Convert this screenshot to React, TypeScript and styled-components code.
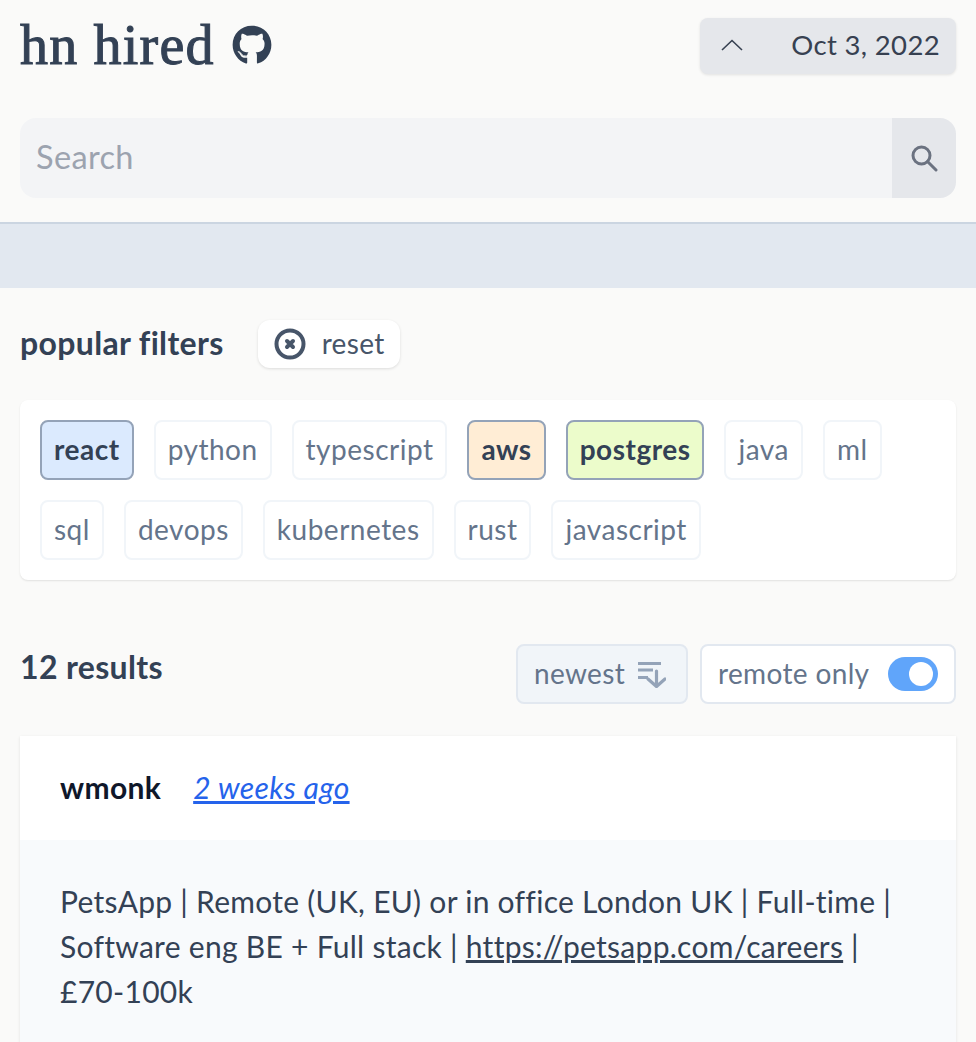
import React from 'react'
import styled, { createGlobalStyle } from 'styled-components'
import { FaGithub } from 'react-icons/fa'

const TAGS: { label: string, color?: string }[] = [
  { label: 'react', color: '#dbeafe' },
  { label: 'python' },
  { label: 'typescript' },
  { label: 'aws', color: '#ffedd5' },
  { label: 'postgres', color: '#ecfccb' },
  { label: 'java' },
  { label: 'ml' },
  { label: 'sql' },
  { label: 'devops' },
  { label: 'kubernetes' },
  { label: 'rust' },
  { label: 'javascript' },
]

export default function App() {
  return (
    <Page>
      <GlobalStyle />
      <Header>
        <TopRow>
          <Brand>
            <Title>hn hired</Title>
            <FaGithub size={40} color="#334155" />
          </Brand>
          <DateButton>
            <svg width="22" height="12" viewBox="0 0 22 12" fill="none" stroke="#374151" strokeWidth="1.6">
              <path d="M1 11 L11 1.5 L21 11" />
            </svg>
            <span>Oct 3, 2022</span>
          </DateButton>
        </TopRow>
        <SearchBar>
          <SearchField>Search</SearchField>
          <SearchButton>
            <svg width="28" height="28" viewBox="0 0 28 28" fill="none" stroke="#6b7280" strokeWidth="3">
              <circle cx="11.5" cy="11.5" r="8.5" />
              <path d="M17.5 17.5 L26 26" strokeLinecap="round" />
            </svg>
          </SearchButton>
        </SearchBar>
      </Header>
      <Band />
      <Main>
        <FilterHead>
          <Heading>popular filters</Heading>
          <ResetButton>
            <svg width="32" height="32" viewBox="0 0 32 32" fill="none" stroke="#475569">
              <circle cx="16" cy="16" r="13.5" strokeWidth="4" />
              <path d="M13 13 L19 19 M19 13 L13 19" strokeWidth="4" strokeLinecap="round" />
            </svg>
            <span>reset</span>
          </ResetButton>
        </FilterHead>
        <TagPanel>
          {TAGS.map(tag => <Tag key={tag.label} $color={tag.color}>{tag.label}</Tag>)}
        </TagPanel>
        <ResultsRow>
          <Heading>12 results</Heading>
          <Controls>
            <SortButton>
              newest
              <svg width="28" height="28" viewBox="0 0 28 28" fill="none" stroke="#94a3b8" strokeWidth="3.2">
                <path d="M0 3.5 H23 M0 10 H15 M0 17.5 H10" />
                <path d="M18.5 11 V26 M10 19 L18.5 26.5 L27 19" strokeLinecap="round" strokeLinejoin="round" />
              </svg>
            </SortButton>
            <RemoteToggle>
              remote only
              <Switch />
            </RemoteToggle>
          </Controls>
        </ResultsRow>
        <Card>
          <CardHead>
            <Author>wmonk</Author>
            <TimeLink href="#">2 weeks ago</TimeLink>
          </CardHead>
          <CardBody>
            <p>
              PetsApp | Remote (UK, EU) or in office London UK | Full-time | Software eng BE + Full stack | <BodyLink href="#">https://petsapp.com/careers</BodyLink> | <NoBreak>£70-100k</NoBreak>
            </p>
            <FadedLine>We help pet owners look after their animals. The team is small and growing</FadedLine>
          </CardBody>
        </Card>
      </Main>
    </Page>
  )
}

const GlobalStyle = createGlobalStyle`
  html, body {
    margin: 0;
    padding: 0;
    background: #fafaf9;
  }
  body {
    font-family: "Lato", sans-serif;
    letter-spacing: 0.35px;
    color: #334155;
  }
`

const Page = styled.div`
  height: 1042px;
  overflow: hidden;
`

const Header = styled.header`
  padding: 18px 20px 24px;
  border-bottom: 2px solid #cbd5e1;
`

const TopRow = styled.div`
  display: flex;
  justify-content: space-between;
  align-items: flex-start;
  margin-bottom: 44px;
`

const Brand = styled.div`
  display: flex;
  align-items: center;
  gap: 17px;
  height: 54px;
`

const Title = styled.h1`
  margin: 0;
  font-family: "Liberation Serif", serif;
  font-size: 56px;
  font-weight: 400;
  letter-spacing: 1.2px;
  color: #334155;
  -webkit-text-stroke: 1px #334155;
`

const DateButton = styled.div`
  width: 256px;
  height: 56px;
  box-sizing: border-box;
  padding: 0 16px 3px 21px;
  display: flex;
  align-items: center;
  justify-content: space-between;
  background: #e5e7eb;
  border-radius: 8px;
  box-shadow: 0 1px 3px rgba(0, 0, 0, 0.1);
  font-size: 27.5px;
  color: #374151;
`

const SearchBar = styled.div`
  display: flex;
  height: 80px;
  border-radius: 16px;
  overflow: hidden;
`

const SearchField = styled.div`
  flex: 1;
  padding: 0 0 4px 16px;
  display: flex;
  align-items: center;
  background: #f3f4f6;
  font-size: 32.5px;
  color: #9ca3af;
`

const SearchButton = styled.div`
  width: 64px;
  display: flex;
  align-items: center;
  justify-content: center;
  background: #e5e7eb;
`

const Band = styled.div`
  height: 64px;
  background: #e2e8f0;
`

const Main = styled.main`
  padding: 32px 20px 0;
`

const FilterHead = styled.div`
  display: flex;
  align-items: center;
  gap: 34px;
  margin-bottom: 32px;
`

const Heading = styled.h2`
  margin: 0 0 2px;
  font-size: 32px;
  line-height: 46px;
  font-weight: 700;
  color: #334155;
`

const ResetButton = styled.div`
  height: 48px;
  width: 142px;
  box-sizing: border-box;
  padding: 0 0 2px 16px;
  display: flex;
  align-items: center;
  gap: 16px;
  background: #fff;
  border-radius: 12px;
  box-shadow: 0 1px 3px rgba(0, 0, 0, 0.12);
  font-size: 28px;
  color: #475569;

  svg {
    margin-top: 2px;
  }
`

const TagPanel = styled.div`
  display: flex;
  flex-wrap: wrap;
  gap: 20px;
  padding: 20px;
  margin-bottom: 64px;
  background: #fff;
  border-radius: 8px;
  box-shadow: 0 1px 2px rgba(0, 0, 0, 0.1);
`

const Tag = styled.div<{ $color?: string }>`
  height: 60px;
  box-sizing: border-box;
  padding: 0 12px 2px;
  display: flex;
  align-items: center;
  border-radius: 8px;
  font-size: 28px;
  letter-spacing: 0.5px;
  background: ${({ $color }) => $color || '#fff'};
  border: 2px solid ${({ $color }) => ($color ? '#94a3b8' : '#f1f5f9')};
  color: ${({ $color }) => ($color ? '#334155' : '#64748b')};
  font-weight: ${({ $color }) => ($color ? 700 : 400)};
`

const ResultsRow = styled.div`
  display: flex;
  justify-content: space-between;
  align-items: flex-start;
  margin-bottom: 32px;
`

const Controls = styled.div`
  display: flex;
  gap: 12px;
`

const SortButton = styled.div`
  width: 172px;
  height: 60px;
  box-sizing: border-box;
  padding: 0 20px 2px 16px;
  display: flex;
  align-items: center;
  justify-content: space-between;
  background: #f1f5f9;
  border: 2px solid #e2e8f0;
  border-radius: 8px;
  font-size: 28px;
  color: #64748b;

  svg {
    margin-top: 2px;
  }
`

const RemoteToggle = styled(SortButton)`
  width: 256px;
  padding-right: 16px;
  background: #fff;
`

const Switch = styled.span`
  position: relative;
  width: 50px;
  height: 34px;
  margin-top: 2px;
  border-radius: 17px;
  background: #60a5fa;

  &::after {
    content: '';
    position: absolute;
    top: 5px;
    right: 5px;
    width: 24px;
    height: 24px;
    border-radius: 50%;
    background: #fff;
  }
`

const Card = styled.article`
  background: #fff;
  box-shadow: 0 1px 3px rgba(0, 0, 0, 0.1);
`

const CardHead = styled.div`
  height: 104px;
  box-sizing: border-box;
  padding: 0 40px 2px;
  display: flex;
  align-items: center;
  gap: 32px;
`

const Author = styled.span`
  font-size: 30px;
  font-weight: 700;
  color: #0f172a;
`

const TimeLink = styled.a`
  font-size: 30px;
  font-style: italic;
  color: #2563eb;
  text-decoration: underline;
`

const CardBody = styled.div`
  padding: 39px 40px 40px;
  background: #f8fafc;
  font-size: 30px;
  line-height: 45px;
  letter-spacing: 0.28px;
  color: #334155;

  p {
    margin: 0;
  }
`

const BodyLink = styled.a`
  color: inherit;
  text-decoration: underline;
`

const NoBreak = styled.span`
  white-space: nowrap;
`

const FadedLine = styled.p`
  && {
    margin-top: 20px;
  }
  color: #94a3b8;
`
